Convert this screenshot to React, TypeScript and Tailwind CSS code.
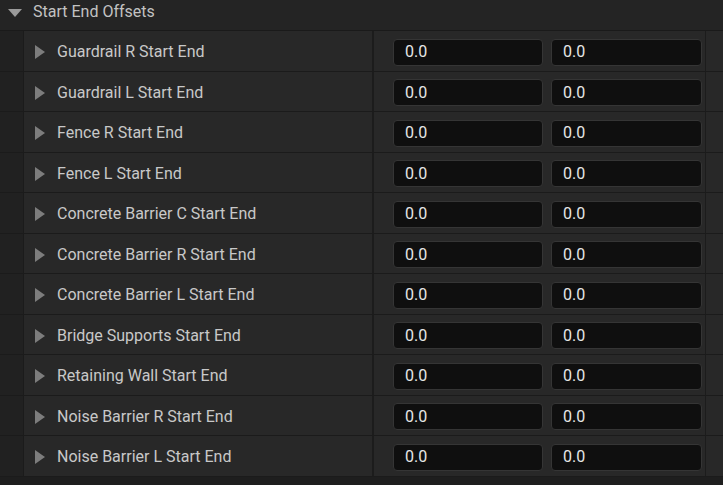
const rows = [
  "Guardrail R Start End",
  "Guardrail L Start End",
  "Fence R Start End",
  "Fence L Start End",
  "Concrete Barrier C Start End",
  "Concrete Barrier R Start End",
  "Concrete Barrier L Start End",
  "Bridge Supports Start End",
  "Retaining Wall Start End",
  "Noise Barrier R Start End",
  "Noise Barrier L Start End",
];

function ValueBox({ value }: { value: string }) {
  return (
    <div className="h-[27px] rounded-[4px] border border-[#353535] bg-[#0f0f0f] flex items-center pl-[11px] text-[16px] text-[#e6e6e6]">
      {value}
    </div>
  );
}

function Row({ label }: { label: string }) {
  return (
    <div className="flex h-[40.5px] border-b border-[#1b1b1b]">
      <div className="w-[24px] bg-[#212121] border-r border-[#1b1b1b]" />
      <div className="w-[348px] bg-[#282828] flex items-center pt-[3px]">
        <svg width="10" height="14" viewBox="0 0 10 14" className="ml-[11px]">
          <path d="M0 0 L10 7 L0 14 Z" fill="#7d7d7d" />
        </svg>
        <span className="ml-[12px] text-[16px] text-[#c8c8c8]">{label}</span>
      </div>
      <div className="w-[2px] bg-[#1c1c1c]" />
      <div className="w-[331px] bg-[#282828] flex items-center pl-[19px] pt-[3px] gap-[8px]">
        <div className="w-[150px]">
          <ValueBox value="0.0" />
        </div>
        <div className="w-[151px]">
          <ValueBox value="0.0" />
        </div>
      </div>
      <div className="w-[1px] bg-[#1c1c1c]" />
      <div className="flex-1 bg-[#282828]" />
    </div>
  );
}

export default function App() {
  return (
    <div
      className="w-[723px] h-[485px] bg-[#1e1e1e] overflow-hidden"
      style={{ fontFamily: "Roboto, 'Liberation Sans', sans-serif" }}
    >
      <div className="h-[31px] bg-[#242424] border-b border-[#1a1a1a] flex items-center pb-[6px]">
        <svg width="14" height="9" viewBox="0 0 14 9" className="ml-[8px] mt-[2px]">
          <path d="M0 0 L14 0 L7 8 Z" fill="#9a9a9a" />
        </svg>
        <span className="ml-[11px] text-[16px] text-[#c2c2c2]">Start End Offsets</span>
      </div>
      {rows.map((r) => (
        <Row key={r} label={r} />
      ))}
    </div>
  );
}
